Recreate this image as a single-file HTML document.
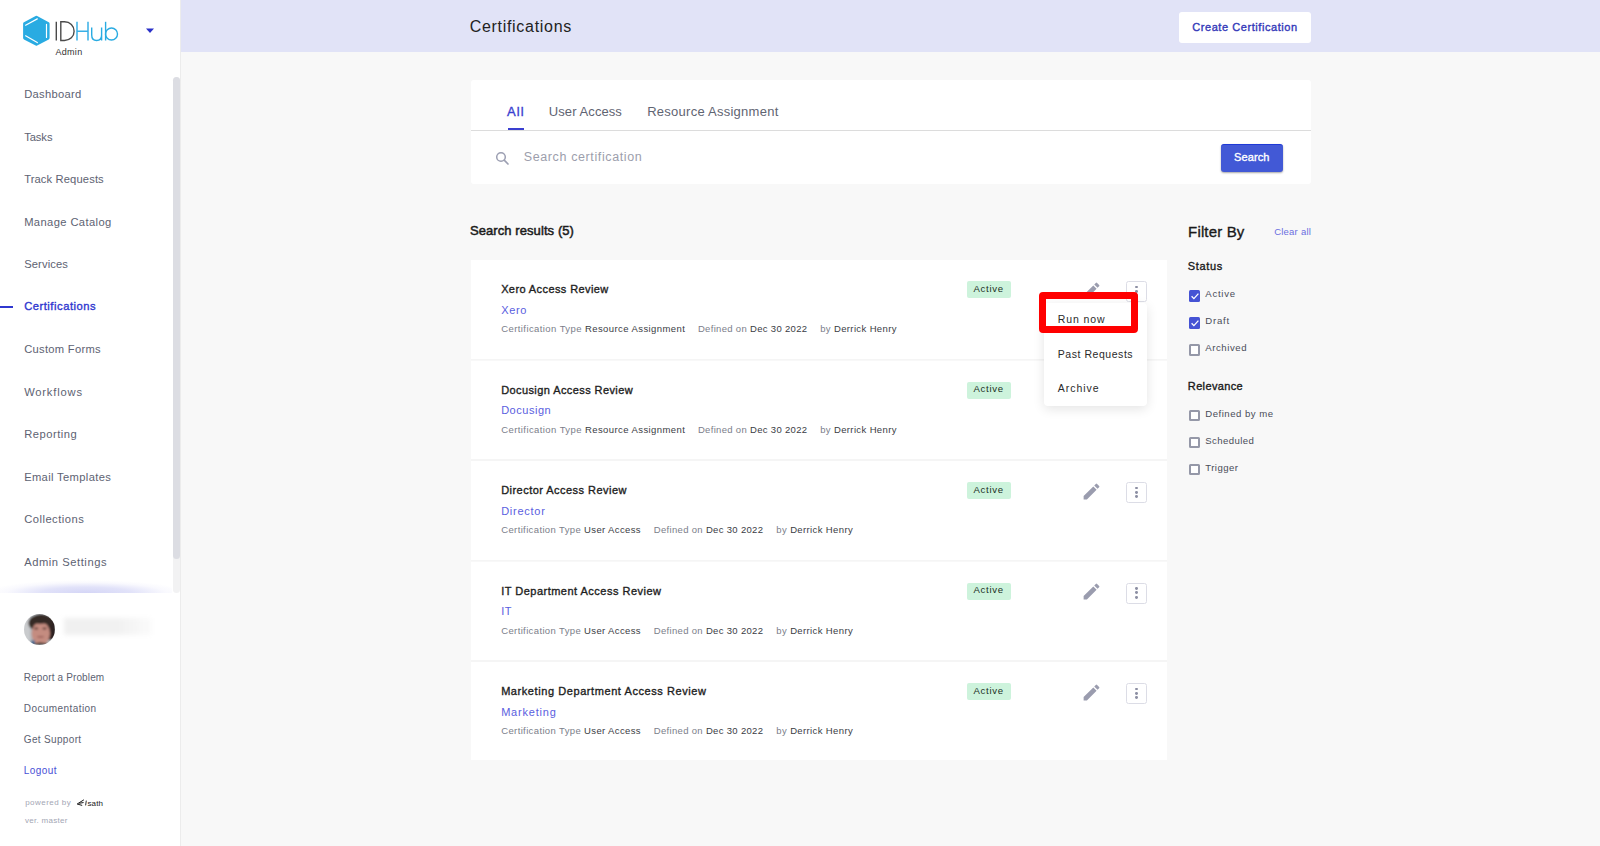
<!DOCTYPE html>
<html><head><meta charset="utf-8"><title>Certifications</title>
<style>
*{box-sizing:content-box;margin:0;padding:0}
html,body{width:1600px;height:846px;overflow:hidden;background:#f8f8f8;font-family:"Liberation Sans", sans-serif}
.t{position:absolute;white-space:pre;font-family:"Liberation Sans", sans-serif}
.b{position:absolute}
.dot{position:absolute;left:7.8px;width:2.8px;height:2.8px;border-radius:50%;background:#8c8fa3}
</style></head><body>
<!-- sidebar -->
<div class="b" style="left:0;top:0;width:180px;height:846px;background:#fff;border-right:1px solid #ececec"></div>
<div class="b" style="left:173px;top:77px;width:7px;height:516px;background:#f2f2f3;border-radius:4px"></div>
<div class="b" style="left:173px;top:77px;width:7px;height:481.5px;background:#dcdde3;border-radius:4px"></div>
<div class="b" style="left:0;top:580px;width:172px;height:13px;background:radial-gradient(ellipse 58% 100% at 50% 100%, rgba(212,213,246,1) 0%, rgba(220,221,248,0.85) 45%, rgba(240,240,252,0.4) 80%, rgba(255,255,255,0) 100%)"></div>
<div class="b" style="left:0;top:305.5px;width:12.7px;height:2px;background:#2f37cf"></div>
<!-- logo -->
<svg class="b" style="left:0;top:0" width="180" height="60" viewBox="0 0 180 60">
 <path d="M36.4 17.4 L48.0 23.7 L48.0 38.0 L36.4 44.1 L24.7 38.0 L24.7 23.7 Z" fill="#29abe2" stroke="#29abe2" stroke-width="3.2" stroke-linejoin="round"/>
 <path d="M25.6 25.2 L37.3 18.9 M46.5 24.3 L46.5 37.4 M25.6 35.8 L37.3 42.6" stroke="#fff" stroke-width="1.2" stroke-linecap="round"/>
 <path d="M56.3 21.8 V40.5" stroke="#4a4a4a" stroke-width="1.4"/>
 <path d="M60.8 21.8 V40.5 H64.5 C70 40.5 74.1 36.6 74.1 31.15 C74.1 25.7 70 21.8 64.5 21.8 Z" stroke="#4a4a4a" stroke-width="1.4" fill="none"/>
 <path d="M77 21.8 V40.5 M88 21.8 V40.5 M77 31.2 H88" stroke="#38b0e6" stroke-width="1.5" fill="none"/>
 <path d="M91.7 27.4 V35 C91.7 38.5 93.8 40.5 96.65 40.5 C99.5 40.5 101.6 38.5 101.6 35 V27.4 M101.6 33 V40.5" stroke="#29abe2" stroke-width="1.4" fill="none"/>
 <path d="M105.6 21.8 V40.5" stroke="#29abe2" stroke-width="1.4"/>
 <circle cx="111.5" cy="34" r="6" stroke="#29abe2" stroke-width="1.4" fill="none"/>
 <path d="M146 28.5 L154 28.5 L150 33 Z" fill="#2a30c8"/>
</svg>
<!-- avatar -->
<svg class="b" style="left:24px;top:614px" width="31" height="31" viewBox="0 0 31 31">
 <defs><clipPath id="cp"><circle cx="15.5" cy="15.5" r="15.5"/></clipPath><filter id="bl" x="-20%" y="-20%" width="140%" height="140%"><feGaussianBlur stdDeviation="0.9"/></filter></defs>
 <g clip-path="url(#cp)"><g filter="url(#bl)">
  <rect x="-3" y="-3" width="37" height="37" fill="#b4b7bb"/>
  <rect x="-3" y="-3" width="9" height="37" fill="#c9cbcd"/>
  <ellipse cx="17.5" cy="9" rx="13" ry="9" fill="#352a25"/>
  <rect x="24" y="6" width="8" height="20" fill="#2e2420"/>
  <ellipse cx="16.8" cy="19.5" rx="9.2" ry="11.5" fill="#c48c80"/>
  <path d="M6 14 C7 9 12 9 16 10 C21 9 26 9 27 14 L27 6 L6 4 Z" fill="#352a25"/>
  <ellipse cx="12.2" cy="14.5" rx="2.2" ry="1" fill="#5a3a34"/>
  <ellipse cx="20.5" cy="14.5" rx="2.2" ry="1" fill="#5a3a34"/>
  <ellipse cx="16.5" cy="22.8" rx="3.5" ry="0.9" fill="#9a5f58"/>
  <path d="M6 31 Q16 26 27 31 Z" fill="#3b2a24"/>
  <rect x="7" y="26.5" width="4" height="4" fill="#4a6a90"/>
 </g></g>
</svg>
<div class="b" style="left:64px;top:618px;width:88px;height:17px;background:linear-gradient(to right,#f0f0f0,#f1f1f1 60%,#fbfbfb);filter:blur(2px)"></div>
<!-- isath -->
<svg class="b" style="left:75px;top:797px" width="32" height="11" viewBox="0 0 32 11">
 <path d="M8.6 3 L2.2 7 L6.8 8.3 M4.6 6.2 L8.2 5.6" stroke="#1a1a1a" stroke-width="1" fill="none" stroke-linecap="round"/>
 <path d="M11.3 3.6 L10.6 8.4" stroke="#1a1a1a" stroke-width="0.9"/>
 <text x="12.4" y="8.5" font-family="Liberation Sans" font-size="8" fill="#1a1a1a" letter-spacing="0.15">sath</text>
</svg>
<!-- header -->
<div class="b" style="left:181px;top:0;width:1419px;height:52px;background:#e1e3f7"></div>
<div class="b" style="left:1179px;top:12px;width:132px;height:31px;background:#fff;border-radius:3px"></div>
<!-- search card -->
<div class="b" style="left:471px;top:80px;width:840px;height:104.4px;background:#fff;border-radius:3px"></div>
<div class="b" style="left:471px;top:130px;width:840px;height:1px;background:#dcdcdc"></div>
<div class="b" style="left:508px;top:128px;width:15.6px;height:2.2px;background:#3a3fd0"></div>
<svg class="b" style="left:494px;top:150px" width="16" height="16" viewBox="0 0 16 16"><circle cx="7" cy="7" r="4.3" stroke="#9c9fb2" stroke-width="1.5" fill="none"/><path d="M10.2 10.2 L14 14" stroke="#9c9fb2" stroke-width="1.7" stroke-linecap="round"/></svg>
<div class="b" style="left:1221px;top:144px;width:62px;height:27.5px;background:#4259d6;border-radius:3px;box-shadow:0 1px 2px rgba(0,0,0,0.35);border-top:1px solid #1f3ad6;box-sizing:border-box"></div>
<div class="b" style="left:471px;top:260px;width:696px;height:98.8px;background:#fff"></div><div class="b" style="left:471px;top:360.5px;width:696px;height:98.8px;background:#fff"></div><div class="b" style="left:471px;top:461px;width:696px;height:98.8px;background:#fff"></div><div class="b" style="left:471px;top:561.5px;width:696px;height:98.8px;background:#fff"></div><div class="b" style="left:471px;top:662px;width:696px;height:98.3px;background:#fff"></div><div class="b" style="left:471px;top:358.8px;width:696px;height:1.7px;background:#f5f5f5"></div><div class="b" style="left:471px;top:459.3px;width:696px;height:1.7px;background:#f5f5f5"></div><div class="b" style="left:471px;top:559.8px;width:696px;height:1.7px;background:#f5f5f5"></div><div class="b" style="left:471px;top:660.3px;width:696px;height:1.7px;background:#f5f5f5"></div><div class="b" style="left:967px;top:281.0px;width:44px;height:17px;background:#cdf3dc;border-radius:2px"></div><div class="b" style="left:1080.5px;top:279.9px;width:21px;height:21px"><svg width="21" height="21" viewBox="0 0 24 24"><path fill="#9a9cae" d="M3 17.25V21h3.75L17.81 9.94l-3.75-3.75L3 17.25zM20.71 7.04a1 1 0 0 0 0-1.41l-2.34-2.34a1 1 0 0 0-1.41 0l-1.83 1.83 3.75 3.75 1.83-1.83z"/></svg></div><div class="b" style="left:1126.1px;top:281.2px;width:19px;height:19px;border:1px solid #dcdde6;border-radius:2.5px;background:#fff"><i class="dot" style="top:3.4px"></i><i class="dot" style="top:7.8px"></i><i class="dot" style="top:12.1px"></i></div><div class="b" style="left:967px;top:381.5px;width:44px;height:17px;background:#cdf3dc;border-radius:2px"></div><div class="b" style="left:1080.5px;top:380.4px;width:21px;height:21px"><svg width="21" height="21" viewBox="0 0 24 24"><path fill="#9a9cae" d="M3 17.25V21h3.75L17.81 9.94l-3.75-3.75L3 17.25zM20.71 7.04a1 1 0 0 0 0-1.41l-2.34-2.34a1 1 0 0 0-1.41 0l-1.83 1.83 3.75 3.75 1.83-1.83z"/></svg></div><div class="b" style="left:1126.1px;top:381.7px;width:19px;height:19px;border:1px solid #dcdde6;border-radius:2.5px;background:#fff"><i class="dot" style="top:3.4px"></i><i class="dot" style="top:7.8px"></i><i class="dot" style="top:12.1px"></i></div><div class="b" style="left:967px;top:482.0px;width:44px;height:17px;background:#cdf3dc;border-radius:2px"></div><div class="b" style="left:1080.5px;top:480.9px;width:21px;height:21px"><svg width="21" height="21" viewBox="0 0 24 24"><path fill="#9a9cae" d="M3 17.25V21h3.75L17.81 9.94l-3.75-3.75L3 17.25zM20.71 7.04a1 1 0 0 0 0-1.41l-2.34-2.34a1 1 0 0 0-1.41 0l-1.83 1.83 3.75 3.75 1.83-1.83z"/></svg></div><div class="b" style="left:1126.1px;top:482.2px;width:19px;height:19px;border:1px solid #dcdde6;border-radius:2.5px;background:#fff"><i class="dot" style="top:3.4px"></i><i class="dot" style="top:7.8px"></i><i class="dot" style="top:12.1px"></i></div><div class="b" style="left:967px;top:582.5px;width:44px;height:17px;background:#cdf3dc;border-radius:2px"></div><div class="b" style="left:1080.5px;top:581.4px;width:21px;height:21px"><svg width="21" height="21" viewBox="0 0 24 24"><path fill="#9a9cae" d="M3 17.25V21h3.75L17.81 9.94l-3.75-3.75L3 17.25zM20.71 7.04a1 1 0 0 0 0-1.41l-2.34-2.34a1 1 0 0 0-1.41 0l-1.83 1.83 3.75 3.75 1.83-1.83z"/></svg></div><div class="b" style="left:1126.1px;top:582.7px;width:19px;height:19px;border:1px solid #dcdde6;border-radius:2.5px;background:#fff"><i class="dot" style="top:3.4px"></i><i class="dot" style="top:7.8px"></i><i class="dot" style="top:12.1px"></i></div><div class="b" style="left:967px;top:683.0px;width:44px;height:17px;background:#cdf3dc;border-radius:2px"></div><div class="b" style="left:1080.5px;top:681.9px;width:21px;height:21px"><svg width="21" height="21" viewBox="0 0 24 24"><path fill="#9a9cae" d="M3 17.25V21h3.75L17.81 9.94l-3.75-3.75L3 17.25zM20.71 7.04a1 1 0 0 0 0-1.41l-2.34-2.34a1 1 0 0 0-1.41 0l-1.83 1.83 3.75 3.75 1.83-1.83z"/></svg></div><div class="b" style="left:1126.1px;top:683.2px;width:19px;height:19px;border:1px solid #dcdde6;border-radius:2.5px;background:#fff"><i class="dot" style="top:3.4px"></i><i class="dot" style="top:7.8px"></i><i class="dot" style="top:12.1px"></i></div>
<!-- menu -->
<div class="b" style="left:1044px;top:302.6px;width:103px;height:103.4px;background:#fff;border-radius:4px;box-shadow:0 3px 12px rgba(0,0,0,0.11)"></div>
<!-- filter checkboxes -->
<div class="b" style="left:1188.5px;top:290.3px;width:11.7px;height:11.7px;background:#4553d4;border-radius:1.5px"><svg width="12" height="12" viewBox="0 0 12 12" style="position:absolute;left:0;top:0"><path d="M2.6 6.2 L4.9 8.6 L9.4 3.6" stroke="#fff" stroke-width="1.3" fill="none"/></svg></div>
<div class="b" style="left:1188.5px;top:317.3px;width:11.7px;height:11.7px;background:#4553d4;border-radius:1.5px"><svg width="12" height="12" viewBox="0 0 12 12" style="position:absolute;left:0;top:0"><path d="M2.6 6.2 L4.9 8.6 L9.4 3.6" stroke="#fff" stroke-width="1.3" fill="none"/></svg></div>
<div class="b" style="left:1188.5px;top:344.3px;width:7.6px;height:7.6px;border:2px solid #9598a8;border-radius:1.5px;background:#fff"></div>
<div class="b" style="left:1188.5px;top:409.8px;width:7.6px;height:7.6px;border:2px solid #9598a8;border-radius:1.5px;background:#fff"></div>
<div class="b" style="left:1188.5px;top:436.8px;width:7.6px;height:7.6px;border:2px solid #9598a8;border-radius:1.5px;background:#fff"></div>
<div class="b" style="left:1188.5px;top:463.8px;width:7.6px;height:7.6px;border:2px solid #9598a8;border-radius:1.5px;background:#fff"></div>
<!-- texts -->
<div class="t" style="left:24.13px;top:89.02px;font-size:11.2px;line-height:11.2px;font-weight:400;color:#5d6272;letter-spacing:0.308px;">Dashboard</div>
<div class="t" style="left:24.13px;top:131.52px;font-size:11.2px;line-height:11.2px;font-weight:400;color:#5d6272;letter-spacing:-0.053px;">Tasks</div>
<div class="t" style="left:24.13px;top:174.02px;font-size:11.2px;line-height:11.2px;font-weight:400;color:#5d6272;letter-spacing:0.128px;">Track Requests</div>
<div class="t" style="left:24.13px;top:216.52px;font-size:11.2px;line-height:11.2px;font-weight:400;color:#5d6272;letter-spacing:0.391px;">Manage Catalog</div>
<div class="t" style="left:24.13px;top:259.02px;font-size:11.2px;line-height:11.2px;font-weight:400;color:#5d6272;letter-spacing:0.127px;">Services</div>
<div class="t" style="left:24.13px;top:300.62px;font-size:11.2px;line-height:11.2px;font-weight:400;-webkit-text-stroke:0.35px #2f37cf;color:#2f37cf;letter-spacing:0.525px;">Certifications</div>
<div class="t" style="left:24.13px;top:344.02px;font-size:11.2px;line-height:11.2px;font-weight:400;color:#5d6272;letter-spacing:0.294px;">Custom Forms</div>
<div class="t" style="left:24.13px;top:386.52px;font-size:11.2px;line-height:11.2px;font-weight:400;color:#5d6272;letter-spacing:0.813px;">Workflows</div>
<div class="t" style="left:24.13px;top:429.02px;font-size:11.2px;line-height:11.2px;font-weight:400;color:#5d6272;letter-spacing:0.510px;">Reporting</div>
<div class="t" style="left:24.13px;top:471.52px;font-size:11.2px;line-height:11.2px;font-weight:400;color:#5d6272;letter-spacing:0.344px;">Email Templates</div>
<div class="t" style="left:24.13px;top:514.02px;font-size:11.2px;line-height:11.2px;font-weight:400;color:#5d6272;letter-spacing:0.496px;">Collections</div>
<div class="t" style="left:24.13px;top:556.52px;font-size:11.2px;line-height:11.2px;font-weight:400;color:#5d6272;letter-spacing:0.550px;">Admin Settings</div>
<div class="t" style="left:55.46px;top:47.58px;font-size:9px;line-height:9px;font-weight:400;color:#333;letter-spacing:0.301px;">Admin</div>
<div class="t" style="left:23.80px;top:672.84px;font-size:10px;line-height:10px;font-weight:400;color:#5d6272;letter-spacing:0.135px;">Report a Problem</div>
<div class="t" style="left:23.80px;top:704.03px;font-size:10px;line-height:10px;font-weight:400;color:#5d6272;letter-spacing:0.420px;">Documentation</div>
<div class="t" style="left:23.80px;top:735.24px;font-size:10px;line-height:10px;font-weight:400;color:#5d6272;letter-spacing:0.338px;">Get Support</div>
<div class="t" style="left:23.80px;top:766.03px;font-size:10px;line-height:10px;font-weight:400;color:#4a4fd6;letter-spacing:0.441px;">Logout</div>
<div class="t" style="left:25.22px;top:799.23px;font-size:8px;line-height:8px;font-weight:400;color:#a3a6b4;letter-spacing:0.453px;">powered by</div>
<div class="t" style="left:25.02px;top:816.83px;font-size:8px;line-height:8px;font-weight:400;color:#a3a6b4;letter-spacing:0.276px;">ver. master</div>
<div class="t" style="left:469.64px;top:19.16px;font-size:16px;line-height:16px;font-weight:400;color:#222;letter-spacing:0.707px;">Certifications</div>
<div class="t" style="left:1192.24px;top:21.99px;font-size:11px;line-height:11px;font-weight:400;-webkit-text-stroke:0.35px #3338b9;color:#3338b9;letter-spacing:0.564px;">Create Certification</div>
<div class="t" style="left:507.02px;top:105.00px;font-size:13px;line-height:13px;font-weight:400;-webkit-text-stroke:0.35px #3a3fd0;color:#3a3fd0;letter-spacing:1.093px;">All</div>
<div class="t" style="left:548.82px;top:105.00px;font-size:13px;line-height:13px;font-weight:400;color:#5f6472;letter-spacing:0.079px;">User Access</div>
<div class="t" style="left:647.22px;top:105.00px;font-size:13px;line-height:13px;font-weight:400;color:#5f6472;letter-spacing:0.255px;">Resource Assignment</div>
<div class="t" style="left:523.75px;top:151.02px;font-size:12.5px;line-height:12.5px;font-weight:400;color:#9c9eac;letter-spacing:0.615px;">Search certification</div>
<div class="t" style="left:1234.09px;top:151.89px;font-size:11px;line-height:11px;font-weight:400;-webkit-text-stroke:0.35px #ffffff;color:#ffffff;letter-spacing:0.104px;">Search</div>
<div class="t" style="left:469.92px;top:224.10px;font-size:13px;line-height:13px;font-weight:400;-webkit-text-stroke:0.5px #1c1c1c;color:#1c1c1c;letter-spacing:0.085px;">Search results (5)</div>
<div class="t" style="left:501.14px;top:284.09px;font-size:11px;line-height:11px;font-weight:400;-webkit-text-stroke:0.35px #1e1e1e;color:#1e1e1e;letter-spacing:0.407px;">Xero Access Review</div>
<div class="t" style="left:501.14px;top:304.59px;font-size:11px;line-height:11px;font-weight:400;color:#5a5ee0;letter-spacing:0.677px;">Xero</div>
<div class="t" style="left:973.42px;top:283.57px;font-size:9.6px;line-height:9.6px;font-weight:400;color:#213026;letter-spacing:0.725px;">Active</div>
<div class="t" style="left:501.14px;top:384.59px;font-size:11px;line-height:11px;font-weight:400;-webkit-text-stroke:0.35px #1e1e1e;color:#1e1e1e;letter-spacing:0.414px;">Docusign Access Review</div>
<div class="t" style="left:501.14px;top:405.09px;font-size:11px;line-height:11px;font-weight:400;color:#5a5ee0;letter-spacing:0.532px;">Docusign</div>
<div class="t" style="left:973.42px;top:384.07px;font-size:9.6px;line-height:9.6px;font-weight:400;color:#213026;letter-spacing:0.725px;">Active</div>
<div class="t" style="left:501.14px;top:485.09px;font-size:11px;line-height:11px;font-weight:400;-webkit-text-stroke:0.35px #1e1e1e;color:#1e1e1e;letter-spacing:0.468px;">Director Access Review</div>
<div class="t" style="left:501.14px;top:505.59px;font-size:11px;line-height:11px;font-weight:400;color:#5a5ee0;letter-spacing:0.738px;">Director</div>
<div class="t" style="left:973.42px;top:484.57px;font-size:9.6px;line-height:9.6px;font-weight:400;color:#213026;letter-spacing:0.725px;">Active</div>
<div class="t" style="left:501.14px;top:585.59px;font-size:11px;line-height:11px;font-weight:400;-webkit-text-stroke:0.35px #1e1e1e;color:#1e1e1e;letter-spacing:0.490px;">IT Department Access Review</div>
<div class="t" style="left:501.14px;top:606.09px;font-size:11px;line-height:11px;font-weight:400;color:#5a5ee0;letter-spacing:0.599px;">IT</div>
<div class="t" style="left:973.42px;top:585.07px;font-size:9.6px;line-height:9.6px;font-weight:400;color:#213026;letter-spacing:0.725px;">Active</div>
<div class="t" style="left:501.14px;top:686.09px;font-size:11px;line-height:11px;font-weight:400;-webkit-text-stroke:0.35px #1e1e1e;color:#1e1e1e;letter-spacing:0.576px;">Marketing Department Access Review</div>
<div class="t" style="left:501.14px;top:706.59px;font-size:11px;line-height:11px;font-weight:400;color:#5a5ee0;letter-spacing:0.798px;">Marketing</div>
<div class="t" style="left:973.42px;top:685.57px;font-size:9.6px;line-height:9.6px;font-weight:400;color:#213026;letter-spacing:0.725px;">Active</div>
<div class="t" style="left:1188.10px;top:224.30px;font-size:15px;line-height:15px;font-weight:400;-webkit-text-stroke:0.35px #1a1a1a;color:#1a1a1a;letter-spacing:0.148px;">Filter By</div>
<div class="t" style="left:1274.13px;top:227.46px;font-size:9.5px;line-height:9.5px;font-weight:400;color:#6a6ee0;letter-spacing:0.238px;">Clear all</div>
<div class="t" style="left:1187.84px;top:260.99px;font-size:11px;line-height:11px;font-weight:400;-webkit-text-stroke:0.35px #1a1a1a;color:#1a1a1a;letter-spacing:0.638px;">Status</div>
<div class="t" style="left:1187.84px;top:380.99px;font-size:11px;line-height:11px;font-weight:400;-webkit-text-stroke:0.35px #1a1a1a;color:#1a1a1a;letter-spacing:0.362px;">Relevance</div>
<div class="t" style="left:1205.32px;top:289.37px;font-size:9.6px;line-height:9.6px;font-weight:400;color:#4a4d58;letter-spacing:0.725px;">Active</div>
<div class="t" style="left:1205.32px;top:316.47px;font-size:9.6px;line-height:9.6px;font-weight:400;color:#4a4d58;letter-spacing:0.743px;">Draft</div>
<div class="t" style="left:1205.32px;top:343.47px;font-size:9.6px;line-height:9.6px;font-weight:400;color:#4a4d58;letter-spacing:0.549px;">Archived</div>
<div class="t" style="left:1205.32px;top:409.17px;font-size:9.6px;line-height:9.6px;font-weight:400;color:#4a4d58;letter-spacing:0.492px;">Defined by me</div>
<div class="t" style="left:1205.32px;top:436.17px;font-size:9.6px;line-height:9.6px;font-weight:400;color:#4a4d58;letter-spacing:0.391px;">Scheduled</div>
<div class="t" style="left:1205.32px;top:463.27px;font-size:9.6px;line-height:9.6px;font-weight:400;color:#4a4d58;letter-spacing:0.420px;">Trigger</div>
<div class="t" style="left:1057.77px;top:313.91px;font-size:10.5px;line-height:10.5px;font-weight:400;color:#2a2a2a;letter-spacing:0.898px;">Run now</div>
<div class="t" style="left:1057.77px;top:348.61px;font-size:10.5px;line-height:10.5px;font-weight:400;color:#2a2a2a;letter-spacing:0.545px;">Past Requests</div>
<div class="t" style="left:1057.77px;top:382.61px;font-size:10.5px;line-height:10.5px;font-weight:400;color:#2a2a2a;letter-spacing:0.971px;">Archive</div>
<div class="t" style="left:501.23px;top:324.46px;font-size:9.5px;line-height:9.5px;letter-spacing:0.415px;color:#7b7e8a">Certification Type <span style="color:#3a3c44">Resource Assignment</span></div>
<div class="t" style="left:697.93px;top:324.46px;font-size:9.5px;line-height:9.5px;letter-spacing:0.319px;color:#7b7e8a">Defined on <span style="color:#3a3c44">Dec 30 2022</span></div>
<div class="t" style="left:820.13px;top:324.46px;font-size:9.5px;line-height:9.5px;letter-spacing:0.374px;color:#7b7e8a">by <span style="color:#3a3c44">Derrick Henry</span></div>
<div class="t" style="left:501.23px;top:424.96px;font-size:9.5px;line-height:9.5px;letter-spacing:0.415px;color:#7b7e8a">Certification Type <span style="color:#3a3c44">Resource Assignment</span></div>
<div class="t" style="left:697.93px;top:424.96px;font-size:9.5px;line-height:9.5px;letter-spacing:0.319px;color:#7b7e8a">Defined on <span style="color:#3a3c44">Dec 30 2022</span></div>
<div class="t" style="left:820.13px;top:424.96px;font-size:9.5px;line-height:9.5px;letter-spacing:0.374px;color:#7b7e8a">by <span style="color:#3a3c44">Derrick Henry</span></div>
<div class="t" style="left:501.23px;top:525.46px;font-size:9.5px;line-height:9.5px;letter-spacing:0.369px;color:#7b7e8a">Certification Type <span style="color:#3a3c44">User Access</span></div>
<div class="t" style="left:653.83px;top:525.46px;font-size:9.5px;line-height:9.5px;letter-spacing:0.319px;color:#7b7e8a">Defined on <span style="color:#3a3c44">Dec 30 2022</span></div>
<div class="t" style="left:776.33px;top:525.46px;font-size:9.5px;line-height:9.5px;letter-spacing:0.374px;color:#7b7e8a">by <span style="color:#3a3c44">Derrick Henry</span></div>
<div class="t" style="left:501.23px;top:625.96px;font-size:9.5px;line-height:9.5px;letter-spacing:0.369px;color:#7b7e8a">Certification Type <span style="color:#3a3c44">User Access</span></div>
<div class="t" style="left:653.83px;top:625.96px;font-size:9.5px;line-height:9.5px;letter-spacing:0.319px;color:#7b7e8a">Defined on <span style="color:#3a3c44">Dec 30 2022</span></div>
<div class="t" style="left:776.33px;top:625.96px;font-size:9.5px;line-height:9.5px;letter-spacing:0.374px;color:#7b7e8a">by <span style="color:#3a3c44">Derrick Henry</span></div>
<div class="t" style="left:501.23px;top:726.46px;font-size:9.5px;line-height:9.5px;letter-spacing:0.369px;color:#7b7e8a">Certification Type <span style="color:#3a3c44">User Access</span></div>
<div class="t" style="left:653.83px;top:726.46px;font-size:9.5px;line-height:9.5px;letter-spacing:0.319px;color:#7b7e8a">Defined on <span style="color:#3a3c44">Dec 30 2022</span></div>
<div class="t" style="left:776.33px;top:726.46px;font-size:9.5px;line-height:9.5px;letter-spacing:0.374px;color:#7b7e8a">by <span style="color:#3a3c44">Derrick Henry</span></div>
<!-- red highlight -->
<div class="b" style="left:1039.3px;top:292.1px;width:84.7px;height:26.7px;border:7px solid #ff0000;border-radius:4px"></div>
</body></html>
